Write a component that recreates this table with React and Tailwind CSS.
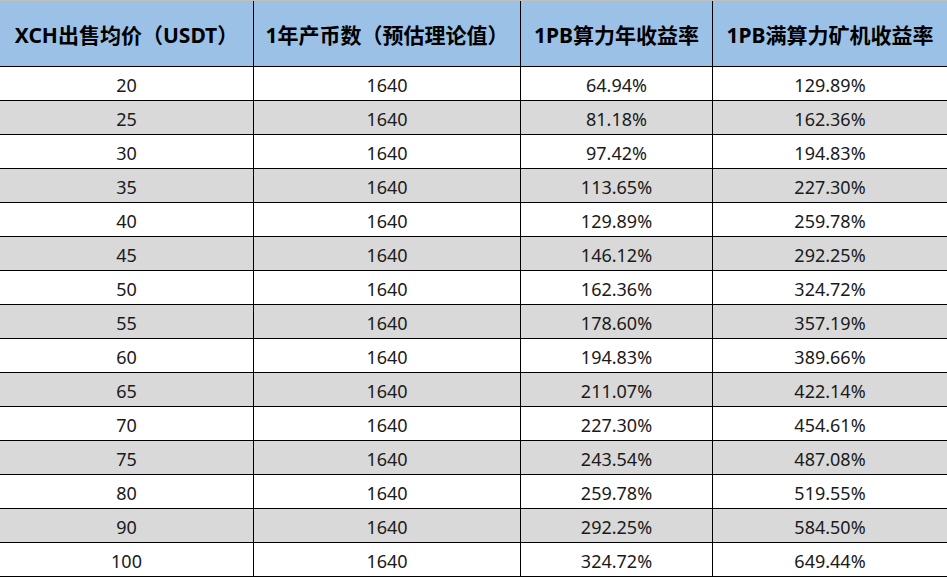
const ROWS = [
  ["20", "64.94%", "129.89%"],
  ["25", "81.18%", "162.36%"],
  ["30", "97.42%", "194.83%"],
  ["35", "113.65%", "227.30%"],
  ["40", "129.89%", "259.78%"],
  ["45", "146.12%", "292.25%"],
  ["50", "162.36%", "324.72%"],
  ["55", "178.60%", "357.19%"],
  ["60", "194.83%", "389.66%"],
  ["65", "211.07%", "422.14%"],
  ["70", "227.30%", "454.61%"],
  ["75", "243.54%", "487.08%"],
  ["80", "259.78%", "519.55%"],
  ["90", "292.25%", "584.50%"],
  ["100", "324.72%", "649.44%"],
];

const HEAD = ["XCH出售均价（USDT）", "1年产币数（预估理论值）", "1PB算力年收益率", "1PB满算力矿机收益率"];

const WIDTHS = ["w-[254px]", "w-[267px]", "w-[192px]", "w-[234px]"];

export default function App() {
  return (
    <div className="w-[947px] h-[577px] overflow-hidden bg-white">
      {/* header */}
      <div className="flex h-[67px] border-t border-[#bfbfbf] border-b border-b-black bg-[#9bc2e6]">
        {HEAD.map((h, i) => (
          <div
            key={i}
            className={`${WIDTHS[i]} shrink-0 flex items-center justify-center pt-[4px] text-[21px] font-bold text-black ${i < 3 ? "border-r border-black" : ""}`}
            style={{ fontFamily: '"Noto Sans", "Noto Sans CJK SC", sans-serif' }}
          >
            {h}
          </div>
        ))}
      </div>

      {ROWS.map((r, idx) => {
        const cells = [r[0], "1640", r[1], r[2]];
        return (
          <div key={idx} className={`flex h-[34px] border-b border-black ${idx % 2 ? "bg-[#d9d9d9]" : "bg-white"}`}>
            {cells.map((c, i) => (
              <div
                key={i}
                className={`${WIDTHS[i]} shrink-0 flex items-center justify-center pt-[4px] text-[18px] text-[#1a1a1a] ${i < 3 ? "border-r border-black" : ""}`}
                style={{ fontFamily: '"Noto Sans", "Noto Sans CJK SC", sans-serif' }}
              >
                {c}
              </div>
            ))}
          </div>
        );
      })}
    </div>
  );
}
